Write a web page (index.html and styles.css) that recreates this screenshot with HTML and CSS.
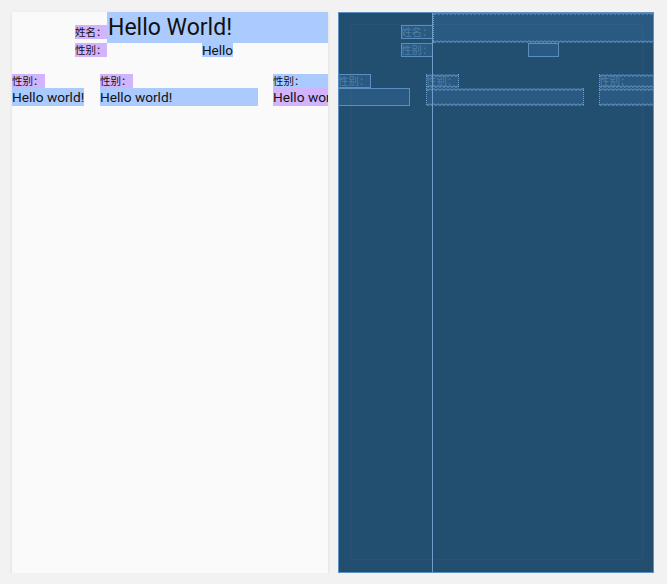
FILE: index.html
```html
<!DOCTYPE html>
<html>
<head>
<meta charset="utf-8">
<link rel="stylesheet" href="styles.css">
</head>
<body>
<div class="stage">
  <div class="screen design">
    <div class="top">
      <div class="lbl name p box">姓名：</div>
      <div class="title b zz">Hello World!</div>
      <div class="lbl sex p box">性别：</div>
      <div class="hello b box">Hello</div>
    </div>
    <div class="cols">
      <div class="col col1">
        <div class="lbl p box">性别：</div>
        <div class="txt b box">Hello world!</div>
      </div>
      <div class="col col2">
        <div class="lbl p zz">性别：</div>
        <div class="txt b zz">Hello world!</div>
      </div>
      <div class="col col3">
        <div class="lbl b zz">性别：</div>
        <div class="txt p zz">Hello world!</div>
      </div>
    </div>
  </div>
  <div class="screen blueprint">
    <div class="top">
      <div class="lbl name p box">姓名：</div>
      <div class="title b zz">Hello World!</div>
      <div class="lbl sex p box">性别：</div>
      <div class="hello b box">Hello</div>
    </div>
    <div class="cols">
      <div class="col col1">
        <div class="lbl p box">性别：</div>
        <div class="txt b box">Hello world!</div>
      </div>
      <div class="col col2">
        <div class="lbl p zz">性别：</div>
        <div class="txt b zz">Hello world!</div>
      </div>
      <div class="col col3">
        <div class="lbl b zz">性别：</div>
        <div class="txt p zz">Hello world!</div>
      </div>
    </div>
    <div class="inner"></div>
    <div class="guide"></div>
    <div class="frame"></div>
  </div>
</div>
</body>
</html>
```
FILE: styles.css
```css
html, body {
  margin: 0;
  background: #f2f2f2;
  font-family: Roboto, "Noto Sans CJK SC", sans-serif;
  color: #111;
}
.stage {
  display: flex;
  gap: 10px;
  padding: 12px 0 0 12px;
}
.screen {
  position: relative;
  width: 316px;
  height: 561px;
  overflow: hidden;
  box-sizing: border-box;
}
.design {
  background: #fafafa;
  box-shadow: 0 1px 3px rgba(0, 0, 0, 0.1);
}
.blueprint {
  background: #224e70;
}
.top {
  display: grid;
  grid-template-columns: 63px 32px 221px;
  grid-template-rows: 31px 14px;
}
.lbl {
  font-family: "Noto Sans CJK SC", sans-serif;
  font-size: 10.5px;
  line-height: 14px;
  height: 14px;
  white-space: nowrap;
  overflow: hidden;
}
.top .name {
  grid-column: 2;
  grid-row: 1;
  align-self: end;
  margin-bottom: 4px;
}
.title {
  grid-column: 3;
  grid-row: 1;
  font-size: 23px;
  line-height: 31px;
  padding-left: 1px;
  white-space: nowrap;
}
.top .sex {
  grid-column: 2;
  grid-row: 2;
}
.hello {
  grid-column: 3;
  grid-row: 2;
  justify-self: center;
  font-size: 13.5px;
  line-height: 14px;
}
.cols {
  display: grid;
  grid-template-columns: 88px 173px 90px;
  margin-top: 17px;
}
.col {
  display: flex;
  flex-direction: column;
  align-items: flex-start;
}
.col .lbl {
  width: 33px;
}
.txt {
  font-size: 13.7px;
  line-height: 18px;
  height: 18px;
  white-space: nowrap;
  overflow: hidden;
}
.col2 .txt {
  width: 158px;
}
.col3 .lbl,
.col3 .txt {
  width: 90px;
}

/* design colours */
.design .p { background: #d2b4fd; }
.design .b { background: #abcbff; }

/* blueprint */
.blueprint .title,
.blueprint .hello,
.blueprint .txt {
  color: transparent;
}
.blueprint .lbl {
  color: #4f7ea8;
}
.blueprint .box {
  background: #2a5a82;
  box-shadow: inset 0 0 0 1px #5b8ec0;
}
.blueprint .zz {
  background-color: #2a5a82;
  background-image:
    url("data:image/svg+xml,%3Csvg xmlns='http://www.w3.org/2000/svg' width='4' height='3'%3E%3Cpolyline points='0,0.5 2,2.5 4,0.5' fill='none' stroke='%2378a6d4' stroke-width='1'/%3E%3C/svg%3E"),
    url("data:image/svg+xml,%3Csvg xmlns='http://www.w3.org/2000/svg' width='4' height='3'%3E%3Cpolyline points='0,0.5 2,2.5 4,0.5' fill='none' stroke='%2378a6d4' stroke-width='1'/%3E%3C/svg%3E"),
    linear-gradient(#6f9dcb 50%, transparent 50%),
    linear-gradient(#6f9dcb 50%, transparent 50%);
  background-repeat: repeat-x, repeat-x, repeat-y, repeat-y;
  background-position: left top, left bottom, left top, right top;
  background-size: 4px 3px, 4px 3px, 1px 2px, 1px 2px;
}
.inner {
  position: absolute;
  left: 12px;
  right: 11px;
  top: 12px;
  bottom: 13px;
  border: 1px solid rgba(255, 255, 255, 0.03);
  pointer-events: none;
}
.guide {
  position: absolute;
  left: 94px;
  top: 0;
  bottom: 0;
  width: 1px;
  background: #6e9dca;
}
.frame {
  position: absolute;
  inset: 0;
  border: 1px solid #5e90c2;
  pointer-events: none;
}
```
